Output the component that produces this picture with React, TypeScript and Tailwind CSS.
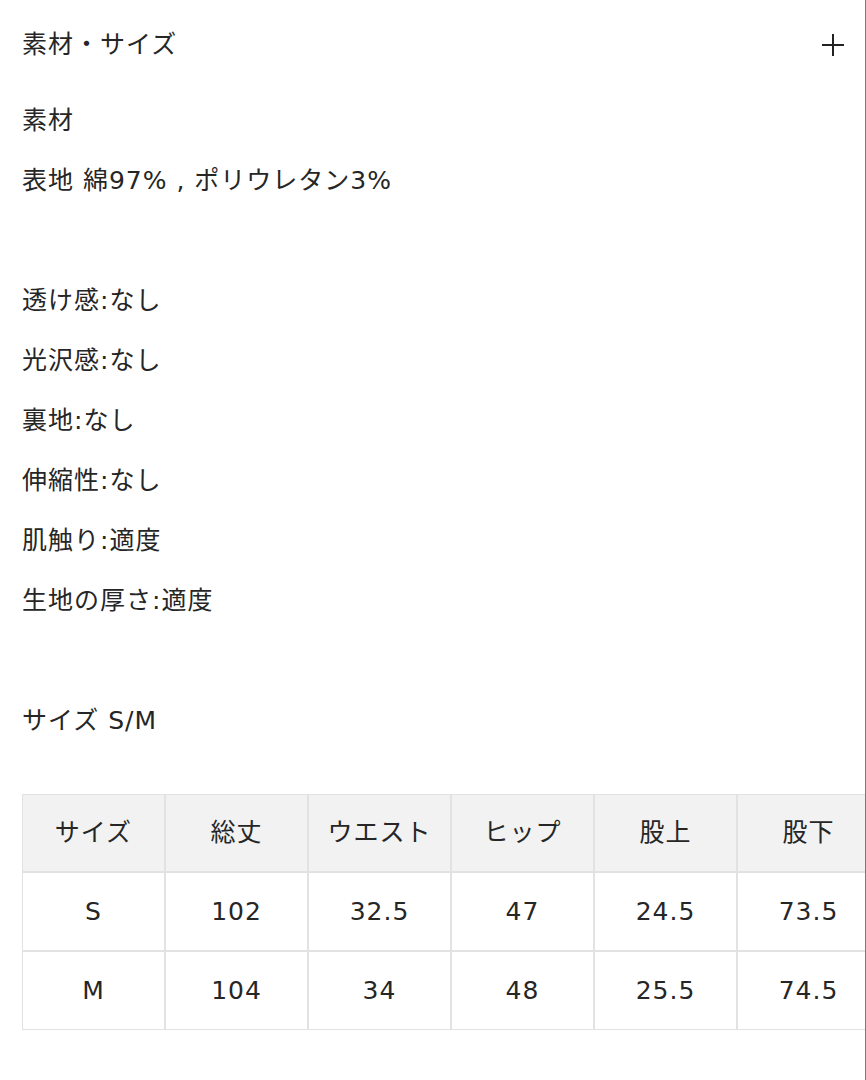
import React from "react";

const font = {
  fontFamily: '"DejaVu Sans", "Noto Sans CJK JP", sans-serif',
};

const lines: string[] = [
  "素材",
  "表地 綿97% , ポリウレタン3%",
  "",
  "透け感:なし",
  "光沢感:なし",
  "裏地:なし",
  "伸縮性:なし",
  "肌触り:適度",
  "生地の厚さ:適度",
  "",
  "サイズ S/M",
];

const head = ["サイズ", "総丈", "ウエスト", "ヒップ", "股上", "股下"];
const rows = [
  ["S", "102", "32.5", "47", "24.5", "73.5"],
  ["M", "104", "34", "48", "25.5", "74.5"],
];

export default function App() {
  return (
    <div
      className="w-[866px] h-[1080px] bg-white overflow-hidden text-[#262626] tracking-[1px]"
      style={font}
    >
      <div className="w-[866px] h-[1080px] border-r border-[#7a7a7a] overflow-hidden">
        <div className="flex items-center justify-between h-[89px] pl-[22px] pr-[21px]">
          <span className="text-[25px] mt-[1px]">素材・サイズ</span>
          <svg width="22" height="22" viewBox="0 0 22 22" className="mt-[1px]">
            <path d="M11 0V22M0 11H22" stroke="#222" strokeWidth="2" />
          </svg>
        </div>
        <div className="mt-[2px] pl-[22px]">
          {lines.map((l, i) => (
            <div key={i} className="h-[60px] leading-[60px] text-[25px] whitespace-pre">
              {l}
            </div>
          ))}
        </div>
        <div className="mt-[43px] pl-[22px]">
          <table className="border-separate border-spacing-0 w-[858px] table-fixed text-[25px]">
            <thead>
              <tr>
                {head.map((h) => (
                  <th
                    key={h}
                    className="h-[78px] w-[143px] border border-[#e2e2e2] bg-[#f2f2f2] font-normal text-center"
                  >
                    {h}
                  </th>
                ))}
              </tr>
            </thead>
            <tbody>
              {rows.map((r, i) => (
                <tr key={i}>
                  {r.map((c, j) => (
                    <td
                      key={j}
                      className="h-[79px] border border-[#e2e2e2] text-center"
                    >
                      {c}
                    </td>
                  ))}
                </tr>
              ))}
            </tbody>
          </table>
        </div>
      </div>
    </div>
  );
}
